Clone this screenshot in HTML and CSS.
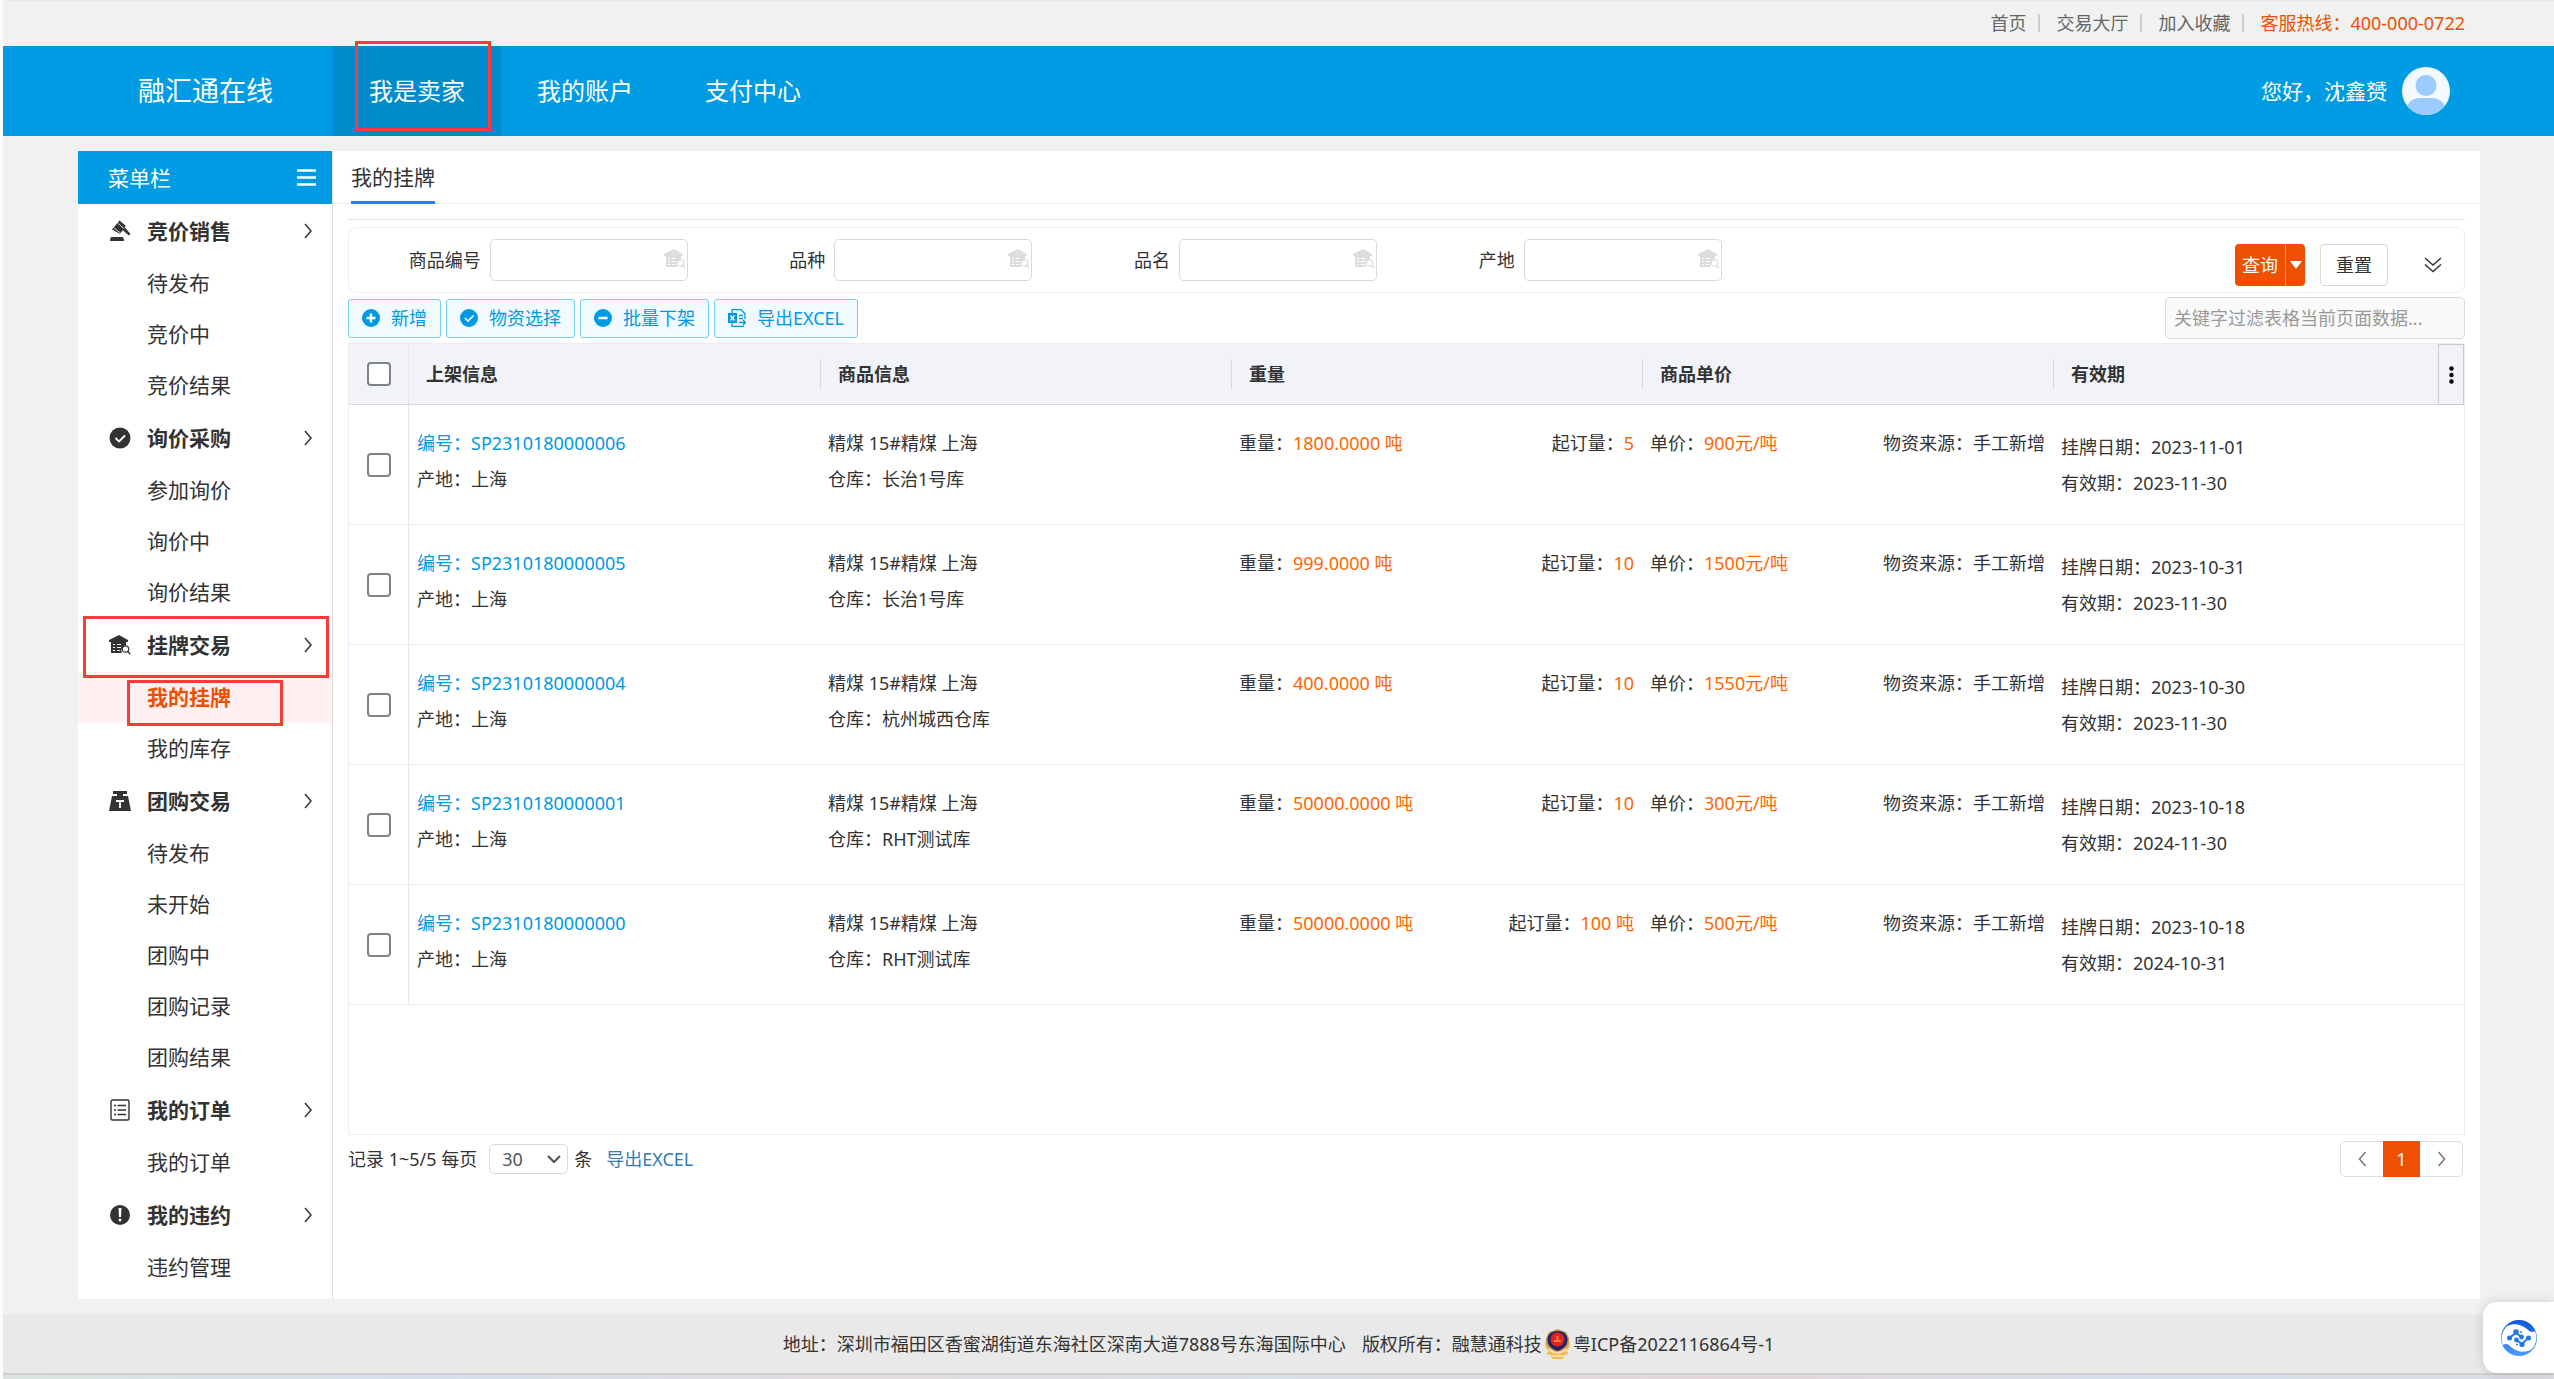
FILE: index.html
```html
<!DOCTYPE html>
<html lang="zh-CN">
<head>
  <meta charset="UTF-8">
  <meta name="viewport" content="width=device-width, initial-scale=1">
  <title>我的挂牌 - 融汇通在线</title>
  <link rel="stylesheet" href="styles.css">
</head>
<body>
  <svg class="sprite" aria-hidden="true">
    <symbol id="i-arrow" viewBox="0 0 8 16"><path d="M1 1l6 7-6 7" fill="none" stroke="currentColor" stroke-width="1.5"/></symbol>
    <symbol id="i-house" viewBox="0 0 22 20">
      <path d="M0 5L10 0l9 5v2H0zM2 7h15v3.500a5 5 0 0 0-4 7.500H2z" fill="currentColor"/>
      <path d="M4 9h2v1H4zM8 9h4v1H8zM4 12h2v1H4zM8 12h4v1H8zM4 15h2v1H4zM8 15h3v1H8z" fill="#fff"/>
      <circle cx="16.500" cy="14" r="3.200" fill="none" stroke="currentColor" stroke-width="1.200"/>
      <path d="M18.800 16.500l2.400 2.700" stroke="currentColor" stroke-width="1.400"/>
    </symbol>
  </svg>

  <div class="topbar">
    <a href="#">首页</a>
    <a href="#">交易大厅</a>
    <a href="#">加入收藏</a>
    <span class="hotline">客服热线：400-000-0722</span>
  </div>

  <header class="header">
    <div class="logo">融汇通在线</div>
    <nav class="nav">
      <a class="nav-item active" href="#">我是卖家<span class="mark mark-nav"></span></a>
      <a class="nav-item" href="#">我的账户</a>
      <a class="nav-item" href="#">支付中心</a>
    </nav>
    <div class="user">
      <span>您好，沈鑫赟</span>
      <svg class="avatar" viewBox="0 0 48 48">
        <defs><clipPath id="face"><circle cx="24" cy="24" r="24"/></clipPath></defs>
        <circle cx="24" cy="24" r="24" fill="#f3f9ff"/>
        <g clip-path="url(#face)" fill="#9cccff">
          <circle cx="24" cy="18.500" r="10.500"/>
          <path d="M3 48c1-12 7-17 15-17h12c8 0 14 5 15 17z"/>
        </g>
      </svg>
    </div>
  </header>

  <div class="wrap">
    <aside class="sidebar">
      <div class="side-head">
        <span>菜单栏</span>
        <svg width="19" height="17" viewBox="0 0 19 17"><path d="M0 1.500h19M0 8.500h19M0 15.500h19" stroke="#fff" stroke-width="2.500"/></svg>
      </div>

      <div class="menu-title">
        <svg class="menu-icon" viewBox="0 0 22 22"><path d="M10.500.5l6 5-.8 1.800 5.800 6.700-1.500 1.600-6.400-5.300-2.400 3.700L3 9.500z" fill="#333"/><path d="M8.500 3l7 6M4.500 7.500l7.500 6" stroke="#fff" stroke-width=".8"/><path d="M3 17h10c1.500 0 2 2 2 4H1c0-2 .5-4 2-4z" fill="#333"/></svg>
        <span>竞价销售</span><svg class="arrow"><use href="#i-arrow"/></svg>
      </div>
      <a class="menu-item" href="#">待发布</a>
      <a class="menu-item" href="#">竞价中</a>
      <a class="menu-item" href="#">竞价结果</a>

      <div class="menu-title">
        <svg class="menu-icon" viewBox="0 0 22 22"><circle cx="11" cy="11" r="10.500" fill="#333"/><path d="M6.500 11l3.500 3.500 6-6" fill="none" stroke="#fff" stroke-width="1.800"/></svg>
        <span>询价采购</span><svg class="arrow"><use href="#i-arrow"/></svg>
      </div>
      <a class="menu-item" href="#">参加询价</a>
      <a class="menu-item" href="#">询价中</a>
      <a class="menu-item" href="#">询价结果</a>

      <div class="menu-title">
        <svg class="menu-icon"><use href="#i-house"/></svg>
        <span>挂牌交易</span><svg class="arrow"><use href="#i-arrow"/></svg>
        <span class="mark mark-title"></span>
      </div>
      <a class="menu-item active" href="#">我的挂牌<span class="mark mark-item"></span></a>
      <a class="menu-item" href="#">我的库存</a>

      <div class="menu-title">
        <svg class="menu-icon" viewBox="0 0 22 22"><path d="M4 1h14v3h-4v2h5l3 15H0L3 6h5V4H4z" fill="#333"/><path d="M7 11h8M11 11v7" stroke="#fff" stroke-width="1.800"/></svg>
        <span>团购交易</span><svg class="arrow"><use href="#i-arrow"/></svg>
      </div>
      <a class="menu-item" href="#">待发布</a>
      <a class="menu-item" href="#">未开始</a>
      <a class="menu-item" href="#">团购中</a>
      <a class="menu-item" href="#">团购记录</a>
      <a class="menu-item" href="#">团购结果</a>

      <div class="menu-title">
        <svg class="menu-icon" viewBox="0 0 22 22"><rect x="2" y="1" width="18" height="20" rx="1.500" fill="none" stroke="#333" stroke-width="1.400"/><path d="M5 6.500h2M8.500 6.500H17M5 11h2M8.500 11H17M5 15.500h2M8.500 15.500H17" stroke="#333" stroke-width="1.300"/></svg>
        <span>我的订单</span><svg class="arrow"><use href="#i-arrow"/></svg>
      </div>
      <a class="menu-item" href="#">我的订单</a>

      <div class="menu-title">
        <svg class="menu-icon" viewBox="0 0 22 22"><circle cx="11" cy="11" r="10" fill="#333"/><path d="M9.500 4h3l-.5 9h-2z" fill="#fff"/><circle cx="11" cy="16" r="1.400" fill="#fff"/></svg>
        <span>我的违约</span><svg class="arrow"><use href="#i-arrow"/></svg>
      </div>
      <a class="menu-item" href="#">违约管理</a>
    </aside>

    <main class="main">
      <div class="tabs"><a class="tab" href="#">我的挂牌</a></div>

      <div class="content">
        <form class="search">
          <div class="fields">
            <div class="field"><label for="code">商品编号</label><div class="field-box"><input type="text" id="code"><svg class="field-icon"><use href="#i-house"/></svg></div></div>
            <div class="field"><label for="kind">品种</label><div class="field-box"><input type="text" id="kind"><svg class="field-icon"><use href="#i-house"/></svg></div></div>
            <div class="field"><label for="name">品名</label><div class="field-box"><input type="text" id="name"><svg class="field-icon"><use href="#i-house"/></svg></div></div>
            <div class="field"><label for="origin">产地</label><div class="field-box"><input type="text" id="origin"><svg class="field-icon"><use href="#i-house"/></svg></div></div>
          </div>
          <div class="search-actions">
            <div class="btn-group">
              <button type="button" class="btn-query">查询</button>
              <button type="button" class="btn-caret" aria-label="更多查询"><span class="caret"></span></button>
            </div>
            <button type="reset" class="btn-reset">重置</button>
            <button type="button" class="btn-more" aria-label="展开">
              <svg width="18" height="16" viewBox="0 0 18 16"><path d="M1 1l8 7 8-7M1 7.500l8 7 8-7" fill="none" stroke="#333" stroke-width="1.500"/></svg>
            </button>
          </div>
        </form>

        <div class="toolbar">
          <button type="button" class="tool">
            <svg width="18" height="18" viewBox="0 0 18 18"><circle cx="9" cy="9" r="9" fill="#0099e5"/><path d="M9 4.500v9M4.500 9h9" stroke="#fff" stroke-width="2.500"/></svg>新增
          </button>
          <button type="button" class="tool">
            <svg width="18" height="18" viewBox="0 0 18 18"><circle cx="9" cy="9" r="9" fill="#0099e5"/><path d="M5 9l3 3 5.500-5.500" fill="none" stroke="#fff" stroke-width="1.600"/></svg>物资选择
          </button>
          <button type="button" class="tool">
            <svg width="18" height="18" viewBox="0 0 18 18"><circle cx="9" cy="9" r="9" fill="#0099e5"/><path d="M4.500 9h9" stroke="#fff" stroke-width="2.500"/></svg>批量下架
          </button>
          <button type="button" class="tool">
            <svg width="18" height="18" viewBox="0 0 18 18"><path d="M4 4V.7h9l4 4V10M4 14v3.300h12" fill="none" stroke="#0099e5" stroke-width="1.300"/><path d="M0 4h9v10H0z" fill="#0099e5"/><path d="M2.500 6.500l4 5M6.500 6.500l-4 5" stroke="#fff" stroke-width="1.400"/><path d="M11 6.500h4M11 9.500h4M11 13.500h6M15 11l2.500 2.500L15 16" fill="none" stroke="#0099e5" stroke-width="1.400"/></svg>导出EXCEL
          </button>
          <input type="text" class="filter" aria-label="关键字过滤" placeholder="关键字过滤表格当前页面数据...">
        </div>

        <div class="grid">
          <button type="button" class="grid-menu" aria-label="表格设置"><svg width="5" height="18" viewBox="0 0 5 18"><circle cx="2.500" cy="2.500" r="2.200"/><circle cx="2.500" cy="9" r="2.200"/><circle cx="2.500" cy="15.500" r="2.200"/></svg></button>
          <table class="table">
            <colgroup><col class="col-check"><col><col><col><col><col></colgroup>
            <thead>
              <tr>
                <th class="check"><input type="checkbox" aria-label="全选"></th>
                <th><span>上架信息</span></th>
                <th><span>商品信息</span></th>
                <th><span>重量</span></th>
                <th><span>商品单价</span></th>
                <th><span>有效期</span></th>
              </tr>
            </thead>
            <tbody>
              <tr>
                <td class="check"><input type="checkbox" aria-label="选择 SP2310180000006"></td>
                <td><a href="#">编号：SP2310180000006</a><p>产地：上海</p></td>
                <td><p>精煤 15#精煤 上海</p><p>仓库：长治1号库</p></td>
                <td><div class="pair"><span>重量：<em>1800.0000 吨</em></span><span>起订量：<em>5</em></span></div></td>
                <td><div class="pair"><span>单价：<em>900元/吨</em></span><span>物资来源：手工新增</span></div></td>
                <td class="dates"><p>挂牌日期：2023-11-01</p><p>有效期：2023-11-30</p></td>
              </tr>
              <tr>
                <td class="check"><input type="checkbox" aria-label="选择 SP2310180000005"></td>
                <td><a href="#">编号：SP2310180000005</a><p>产地：上海</p></td>
                <td><p>精煤 15#精煤 上海</p><p>仓库：长治1号库</p></td>
                <td><div class="pair"><span>重量：<em>999.0000 吨</em></span><span>起订量：<em>10</em></span></div></td>
                <td><div class="pair"><span>单价：<em>1500元/吨</em></span><span>物资来源：手工新增</span></div></td>
                <td class="dates"><p>挂牌日期：2023-10-31</p><p>有效期：2023-11-30</p></td>
              </tr>
              <tr>
                <td class="check"><input type="checkbox" aria-label="选择 SP2310180000004"></td>
                <td><a href="#">编号：SP2310180000004</a><p>产地：上海</p></td>
                <td><p>精煤 15#精煤 上海</p><p>仓库：杭州城西仓库</p></td>
                <td><div class="pair"><span>重量：<em>400.0000 吨</em></span><span>起订量：<em>10</em></span></div></td>
                <td><div class="pair"><span>单价：<em>1550元/吨</em></span><span>物资来源：手工新增</span></div></td>
                <td class="dates"><p>挂牌日期：2023-10-30</p><p>有效期：2023-11-30</p></td>
              </tr>
              <tr>
                <td class="check"><input type="checkbox" aria-label="选择 SP2310180000001"></td>
                <td><a href="#">编号：SP2310180000001</a><p>产地：上海</p></td>
                <td><p>精煤 15#精煤 上海</p><p>仓库：RHT测试库</p></td>
                <td><div class="pair"><span>重量：<em>50000.0000 吨</em></span><span>起订量：<em>10</em></span></div></td>
                <td><div class="pair"><span>单价：<em>300元/吨</em></span><span>物资来源：手工新增</span></div></td>
                <td class="dates"><p>挂牌日期：2023-10-18</p><p>有效期：2024-11-30</p></td>
              </tr>
              <tr>
                <td class="check"><input type="checkbox" aria-label="选择 SP2310180000000"></td>
                <td><a href="#">编号：SP2310180000000</a><p>产地：上海</p></td>
                <td><p>精煤 15#精煤 上海</p><p>仓库：RHT测试库</p></td>
                <td><div class="pair"><span>重量：<em>50000.0000 吨</em></span><span>起订量：<em>100 吨</em></span></div></td>
                <td><div class="pair"><span>单价：<em>500元/吨</em></span><span>物资来源：手工新增</span></div></td>
                <td class="dates"><p>挂牌日期：2023-10-18</p><p>有效期：2024-10-31</p></td>
              </tr>
            </tbody>
          </table>
        </div>

        <div class="pager">
          <label for="size">记录 1~5/5 每页</label>
          <div class="size-box">
            <select id="size"><option>30</option><option>50</option></select>
            <svg class="size-arrow" width="14" height="9" viewBox="0 0 14 9"><path d="M1 1l6 6 6-6" fill="none" stroke="#555" stroke-width="2.200"/></svg>
          </div>
          <span>条</span>
          <a class="export" href="#">导出EXCEL</a>
          <div class="pages">
            <a href="#" aria-label="上一页"><svg class="prev"><use href="#i-arrow"/></svg></a>
            <a class="current" href="#">1</a>
            <a href="#" aria-label="下一页"><svg><use href="#i-arrow"/></svg></a>
          </div>
        </div>
      </div>
    </main>
  </div>

  <footer class="footer">
    <span class="address">地址：深圳市福田区香蜜湖街道东海社区深南大道7888号东海国际中心</span>
    <span>版权所有：融慧通科技</span>
    <svg width="27" height="30" viewBox="0 0 27 30">
      <path d="M1 12c0 5 1 8 4 10l-3 3 5 1 1 4h11l1-4 5-1-3-3c3-2 4-5 4-10l-4 6H5z" fill="#efb95a"/>
      <path d="M13.500 0l4 1.500 4.500 1.500 3 6c1 8-4 13-11.500 16C6 22 1 17 2 9l3-6 4.500-1.500z" fill="#c9964a"/>
      <path d="M13.500 2c7 0 10 4 10 9s-4 9-10 11c-6-2-10-6-10-11s3-9 10-9z" fill="#1f2466"/>
      <circle cx="13.500" cy="10.500" r="7" fill="#e3221c"/>
      <path d="M10 12h7M13.500 7v4" stroke="#ff9a4e" stroke-width="1.500"/>
      <path d="M5 20c5 5 12 5 17 0M8 27h11" fill="none" stroke="#ffdf9a" stroke-width="2"/>
    </svg>
    <a href="#">粤ICP备2022116864号-1</a>
  </footer>
  <div class="strip"></div>

  <button type="button" class="chat" aria-label="在线客服">
    <svg width="36" height="36" viewBox="0 0 36 36">
      <defs><linearGradient id="blue" x1="0" y1="0" x2="0" y2="1"><stop offset="0" stop-color="#0a58dd"/><stop offset="1" stop-color="#4c9cff"/></linearGradient></defs>
      <path fill="url(#blue)" fill-rule="evenodd" d="M18 0a18 18 0 1 1 0 36 18 18 0 0 1 0-36zM2 25c3-2 5-1 8 2 6 5 12 6 20 3a17 17 0 0 0 4-19c-3 2-5 1-8-2C20 4 13 3 6 6a17 17 0 0 0-4 19z"/>
      <path d="M8.500 18l3.500-3 3-2 5.500 4M15.500 20l5.500 4 3-3 3.500-3" stroke="#2176ec" stroke-width="2" fill="none"/>
      <g fill="#2176ec"><circle cx="8.500" cy="18" r="2.500"/><circle cx="15" cy="12" r="2.800"/><circle cx="20.500" cy="17" r="2.400"/><circle cx="15.500" cy="20" r="2.400"/><circle cx="21" cy="24.500" r="2.600"/><circle cx="27.500" cy="18" r="2.500"/><circle cx="20" cy="12" r="1"/><circle cx="16" cy="24.500" r="1"/></g>
    </svg>
  </button>
</body>
</html>
```

FILE: styles.css
```css
* {
  margin: 0;
  padding: 0;
  box-sizing: border-box;
}

body {
  min-height: 100vh;
  display: flex;
  flex-direction: column;
  border-left: 3px solid #fbfbfb;
  background: #f1f1f1;
  color: #333;
  font: 18px/36px "Noto Sans", "Noto Sans CJK SC", sans-serif;
}

a {
  color: inherit;
  text-decoration: none;
}

button,
input,
select {
  font: inherit;
  color: inherit;
}

button {
  display: flex;
  align-items: center;
  justify-content: center;
  cursor: pointer;
}

.sprite {
  position: absolute;
  width: 0;
  height: 0;
}

/* top */
.topbar {
  display: flex;
  align-items: center;
  justify-content: flex-end;
  height: 46px;
  padding: 0 89px 2px 0;
  border-top: 1px solid #e9e9e9;
  color: #666;
}

.topbar a {
  display: flex;
  align-items: center;
}

.topbar a::after {
  content: "";
  width: 2px;
  height: 18px;
  margin: 0 16px 0 12px;
  background: #ccc;
}

.hotline {
  color: #ef4f00;
}

.header {
  display: flex;
  align-items: center;
  height: 90px;
  padding-right: 104px;
  background: #009ce3;
  color: #fff;
}

.logo {
  width: 330px;
  padding-left: 135px;
  font-size: 27px;
}

.nav {
  display: flex;
}

.nav-item {
  position: relative;
  width: 168px;
  font-size: 24px;
  line-height: 90px;
  text-align: center;
}

.nav-item.active {
  background: #008ccc;
}

.user {
  display: flex;
  align-items: center;
  gap: 15px;
  margin-left: auto;
  font-size: 21px;
}

.avatar {
  width: 48px;
  height: 48px;
}

/* red highlight frames */
.mark {
  position: absolute;
  border: 3px solid #fc3a3a;
  z-index: 2;
}

.mark-nav {
  inset: -5px 10px 5px 22px;
}

.mark-title {
  inset: -2px 3px -6px 5px;
}

.mark-item {
  inset: 8px 49px -3px 49px;
}

.wrap {
  display: flex;
  flex: 1;
  margin: 15px 74px 15px 75px;
  background: #fff;
}

/* sidebar */
.sidebar {
  width: 255px;
  flex: none;
  padding-bottom: 6px;
  border-right: 1px solid #ddd;
  font-size: 21px;
}

.side-head {
  display: flex;
  align-items: center;
  justify-content: space-between;
  height: 53px;
  padding: 0 16px 0 30px;
  background: #009ce3;
  color: #fff;
}

.menu-title {
  position: relative;
  display: flex;
  align-items: center;
  height: 54px;
  padding: 0 20px 0 31px;
  font-weight: bold;
}

.menu-icon {
  width: 22px;
  height: 22px;
  margin-right: 16px;
}

.arrow {
  width: 8px;
  height: 16px;
  margin-left: auto;
}

.menu-item {
  position: relative;
  display: block;
  padding-left: 69px;
  line-height: 51px;
}

.menu-item.active {
  background: #fff1f1;
  color: #ef4f00;
  font-weight: bold;
}

/* main */
.main {
  flex: 1;
  min-width: 0;
}

.tabs {
  display: flex;
  height: 53px;
  padding-left: 18px;
  border-bottom: 1px solid #eee;
}

.tab {
  height: 53px;
  border-bottom: 3px solid #2b7bff;
  font-size: 21px;
  line-height: 52px;
}

.content {
  margin: 15px 15px 0;
  padding-top: 7px;
  border-top: 1px solid #e2e2e2;
}

.search {
  display: flex;
  height: 66px;
  border: 1px solid #eee;
  border-radius: 8px;
}

.fields {
  display: grid;
  grid-template-columns: repeat(4, 1fr);
  flex: 15;
  align-items: center;
}

.field {
  display: flex;
  align-items: center;
  justify-content: flex-end;
  gap: 9px;
  padding-right: 6px;
}

.field-box {
  position: relative;
  width: 198px;
}

.field-box input {
  display: block;
  width: 100%;
  height: 42px;
  padding: 0 30px 0 9px;
  border: 1px solid #d6dae6;
  border-radius: 5px;
}

.field-icon {
  position: absolute;
  top: 10px;
  right: 2px;
  width: 22px;
  height: 20px;
  color: #ddd;
}

.search-actions {
  display: flex;
  flex: 8;
  align-items: center;
  justify-content: flex-end;
  padding: 10px 1px 0 0;
}

.btn-group {
  display: flex;
  height: 42px;
  margin-right: 15px;
  border-radius: 4px;
  overflow: hidden;
}

.btn-query,
.btn-caret {
  border: 0;
  background: #ef4f00;
  color: #fff;
}

.btn-query {
  width: 50px;
}

.btn-caret {
  width: 20px;
  border-left: 1px solid #ffa67c;
}

.caret {
  border: 6px solid transparent;
  border-top: 8px solid #fff;
  border-bottom: 0;
}

.btn-reset {
  width: 68px;
  height: 42px;
  border: 1px solid #d6dae6;
  border-radius: 4px;
  background: #fff;
}

.btn-more {
  width: 60px;
  height: 42px;
  margin-left: 15px;
  border: 0;
  background: none;
}

/* toolbar */
.toolbar {
  display: flex;
  align-items: center;
  gap: 5px;
  height: 50px;
}

.tool {
  gap: 11px;
  height: 39px;
  padding: 0 13px;
  border: 1px solid #79cdf0;
  border-radius: 3px;
  background: #f1faff;
  color: #0099e5;
}

.filter {
  width: 300px;
  height: 42px;
  margin-left: auto;
  padding: 0 8px;
  border: 1px solid #d6dae6;
  border-radius: 5px;
  background: #fafafa;
}

.filter::placeholder {
  color: #999;
}

/* data grid */
.grid {
  position: relative;
  min-height: 792px;
  border: 1px solid #eee;
}

.grid-menu {
  position: absolute;
  top: 0;
  right: 0;
  width: 26px;
  height: 61px;
  border: 1px solid #c8cad2;
  background: #f2f3f9;
}

.table {
  width: 100%;
  table-layout: fixed;
  border-collapse: separate;
  border-spacing: 0;
}

.col-check {
  width: 60px;
}

.table th {
  height: 61px;
  border-bottom: 1px solid #d3d8e4;
  background: #f2f3f9;
  text-align: left;
}

.table th span {
  display: block;
  padding-left: 17px;
  line-height: 30px;
}

.table th + th + th span {
  border-left: 1px solid #d9dbe3;
}

.table td {
  height: 120px;
  padding: 20px 8px 0;
  border-bottom: 1px solid #ebedf3;
  vertical-align: top;
}

.table .check {
  padding: 0;
  border-right: 1px solid #e4e6ee;
  text-align: center;
  vertical-align: middle;
}

.table input {
  display: block;
  width: 24px;
  height: 24px;
  margin: 0 auto;
  appearance: none;
  border: 2px solid #7d8488;
  border-radius: 4px;
  background: #fff;
}

.table td a {
  display: block;
  color: #0099e5;
}

.table em {
  color: #ff6600;
  font-style: normal;
}

.table .dates {
  padding-top: 24px;
}

.pair {
  display: flex;
  justify-content: space-between;
}

/* pager */
.pager {
  display: flex;
  align-items: center;
  padding-top: 6px;
}

.size-box {
  position: relative;
  margin: 0 6px 0 12px;
}

.size-box select {
  display: block;
  width: 79px;
  height: 30px;
  padding-left: 12px;
  appearance: none;
  border: 1px solid #d6dae6;
  border-radius: 5px;
  background: #fff;
  color: #555;
  line-height: 26px;
}

.size-arrow {
  position: absolute;
  top: 11px;
  right: 7px;
  pointer-events: none;
}

.export {
  margin-left: 14px;
  color: #337ab7;
}

.pages {
  display: flex;
  margin: 0 2px 0 auto;
  border: 1px solid #ddd;
  border-radius: 5px;
  color: #777;
}

.pages a {
  display: flex;
  align-items: center;
  justify-content: center;
  width: 42px;
  height: 34px;
}

.pages svg {
  width: 9px;
  height: 16px;
}

.pages .prev {
  transform: scaleX(-1);
}

.pages .current {
  width: 37px;
  height: 36px;
  margin: -1px 0;
  background: #ef4f00;
  color: #fff;
}

/* footer */
.footer {
  display: flex;
  align-items: center;
  justify-content: center;
  gap: 2px;
  height: 59px;
  background: #e9e9e9;
}

.address {
  margin-right: 14px;
}

.strip {
  height: 6px;
  border-top: 2px solid #cfcfd1;
  background: linear-gradient(90deg, #dce4e0, #d5dfec, #e2dcdf, #d8dfe6, #e4d6d8, #d5deeb, #dcdce2);
}

.chat {
  position: fixed;
  right: 0;
  bottom: 6px;
  width: 71px;
  height: 71px;
  border: 0;
  border-radius: 14px 0 0 14px;
  background: #fff;
  box-shadow: 0 0 12px rgba(0, 0, 0, 0.15);
}
```
